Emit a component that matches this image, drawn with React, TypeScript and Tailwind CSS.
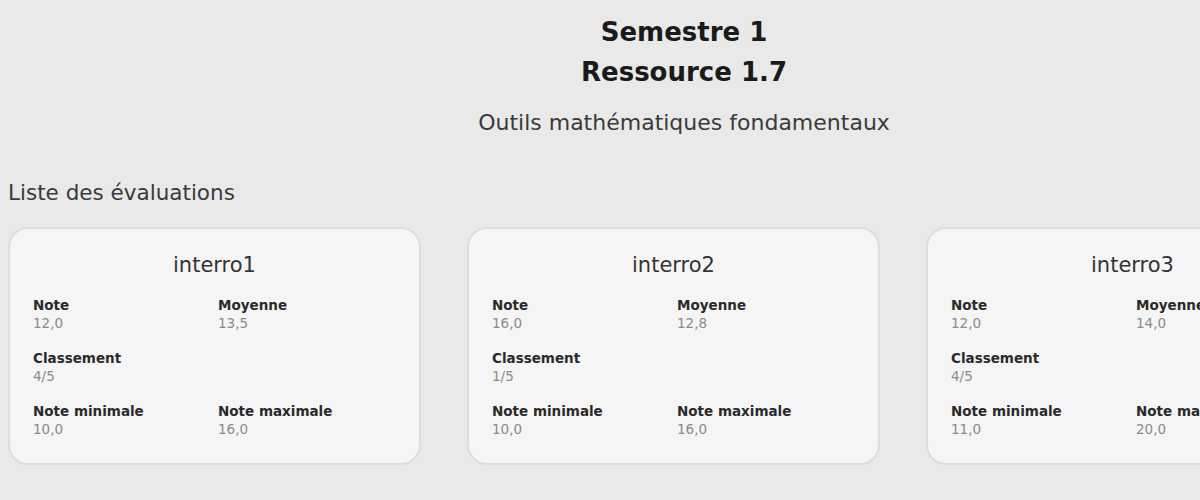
import React from 'react';

type Evaluation = {
  title: string;
  note: string;
  moyenne: string;
  classement: string;
  min: string;
  max: string;
};

const evaluations: Evaluation[] = [
  { title: 'interro1', note: '12,0', moyenne: '13,5', classement: '4/5', min: '10,0', max: '16,0' },
  { title: 'interro2', note: '16,0', moyenne: '12,8', classement: '1/5', min: '10,0', max: '16,0' },
  { title: 'interro3', note: '12,0', moyenne: '14,0', classement: '4/5', min: '11,0', max: '20,0' },
];

function Field({ label, value }: { label: string; value: string }) {
  return (
    <div className="flex flex-col">
      <span className="text-[13.5px] leading-[18px] font-bold text-[#2a2a2a]">{label}</span>
      <span className="text-[13.5px] leading-[18px] text-[#8a8a8a]">{value}</span>
    </div>
  );
}

function EvalCard({ e }: { e: Evaluation }) {
  return (
    <div className="w-[413px] shrink-0 rounded-[20px] border-2 border-[#dcdde0] bg-[#f5f5f5] px-[23px] pt-[22px] pb-[25px]">
      <h3 className="text-center text-[21px] leading-[28px] text-[#333]">{e.title}</h3>
      <div className="mt-[17px] grid grid-cols-[185px_1fr] gap-y-[17px]">
        <Field label="Note" value={e.note} />
        <Field label="Moyenne" value={e.moyenne} />
        <Field label="Classement" value={e.classement} />
        <div />
        <Field label="Note minimale" value={e.min} />
        <Field label="Note maximale" value={e.max} />
      </div>
    </div>
  );
}

export default function App() {
  return (
    <div className="h-[500px] w-[1200px] overflow-hidden bg-[#e9e9e9] font-['DejaVu_Sans',sans-serif]">
      <div className="w-[1368px]">
        <div className="pt-[12px] text-center">
          <h1 className="text-[26px] leading-[40px] font-bold text-[#1a1a1a]">Semestre 1</h1>
          <h2 className="text-[26px] leading-[40px] font-bold text-[#1a1a1a]">Ressource 1.7</h2>
          <p className="mt-[19px] text-[22px] leading-[24px] text-[#3a3a3a]">Outils mathématiques fondamentaux</p>
        </div>
        <h4 className="mt-[46px] pl-[8px] text-[21.5px] leading-[24px] text-[#3a3a3a]">Liste des évaluations</h4>
        <div className="mt-[22px] flex gap-[46px] pl-[8px]">
          {evaluations.map((e) => (
            <EvalCard key={e.title} e={e} />
          ))}
        </div>
      </div>
    </div>
  );
}
